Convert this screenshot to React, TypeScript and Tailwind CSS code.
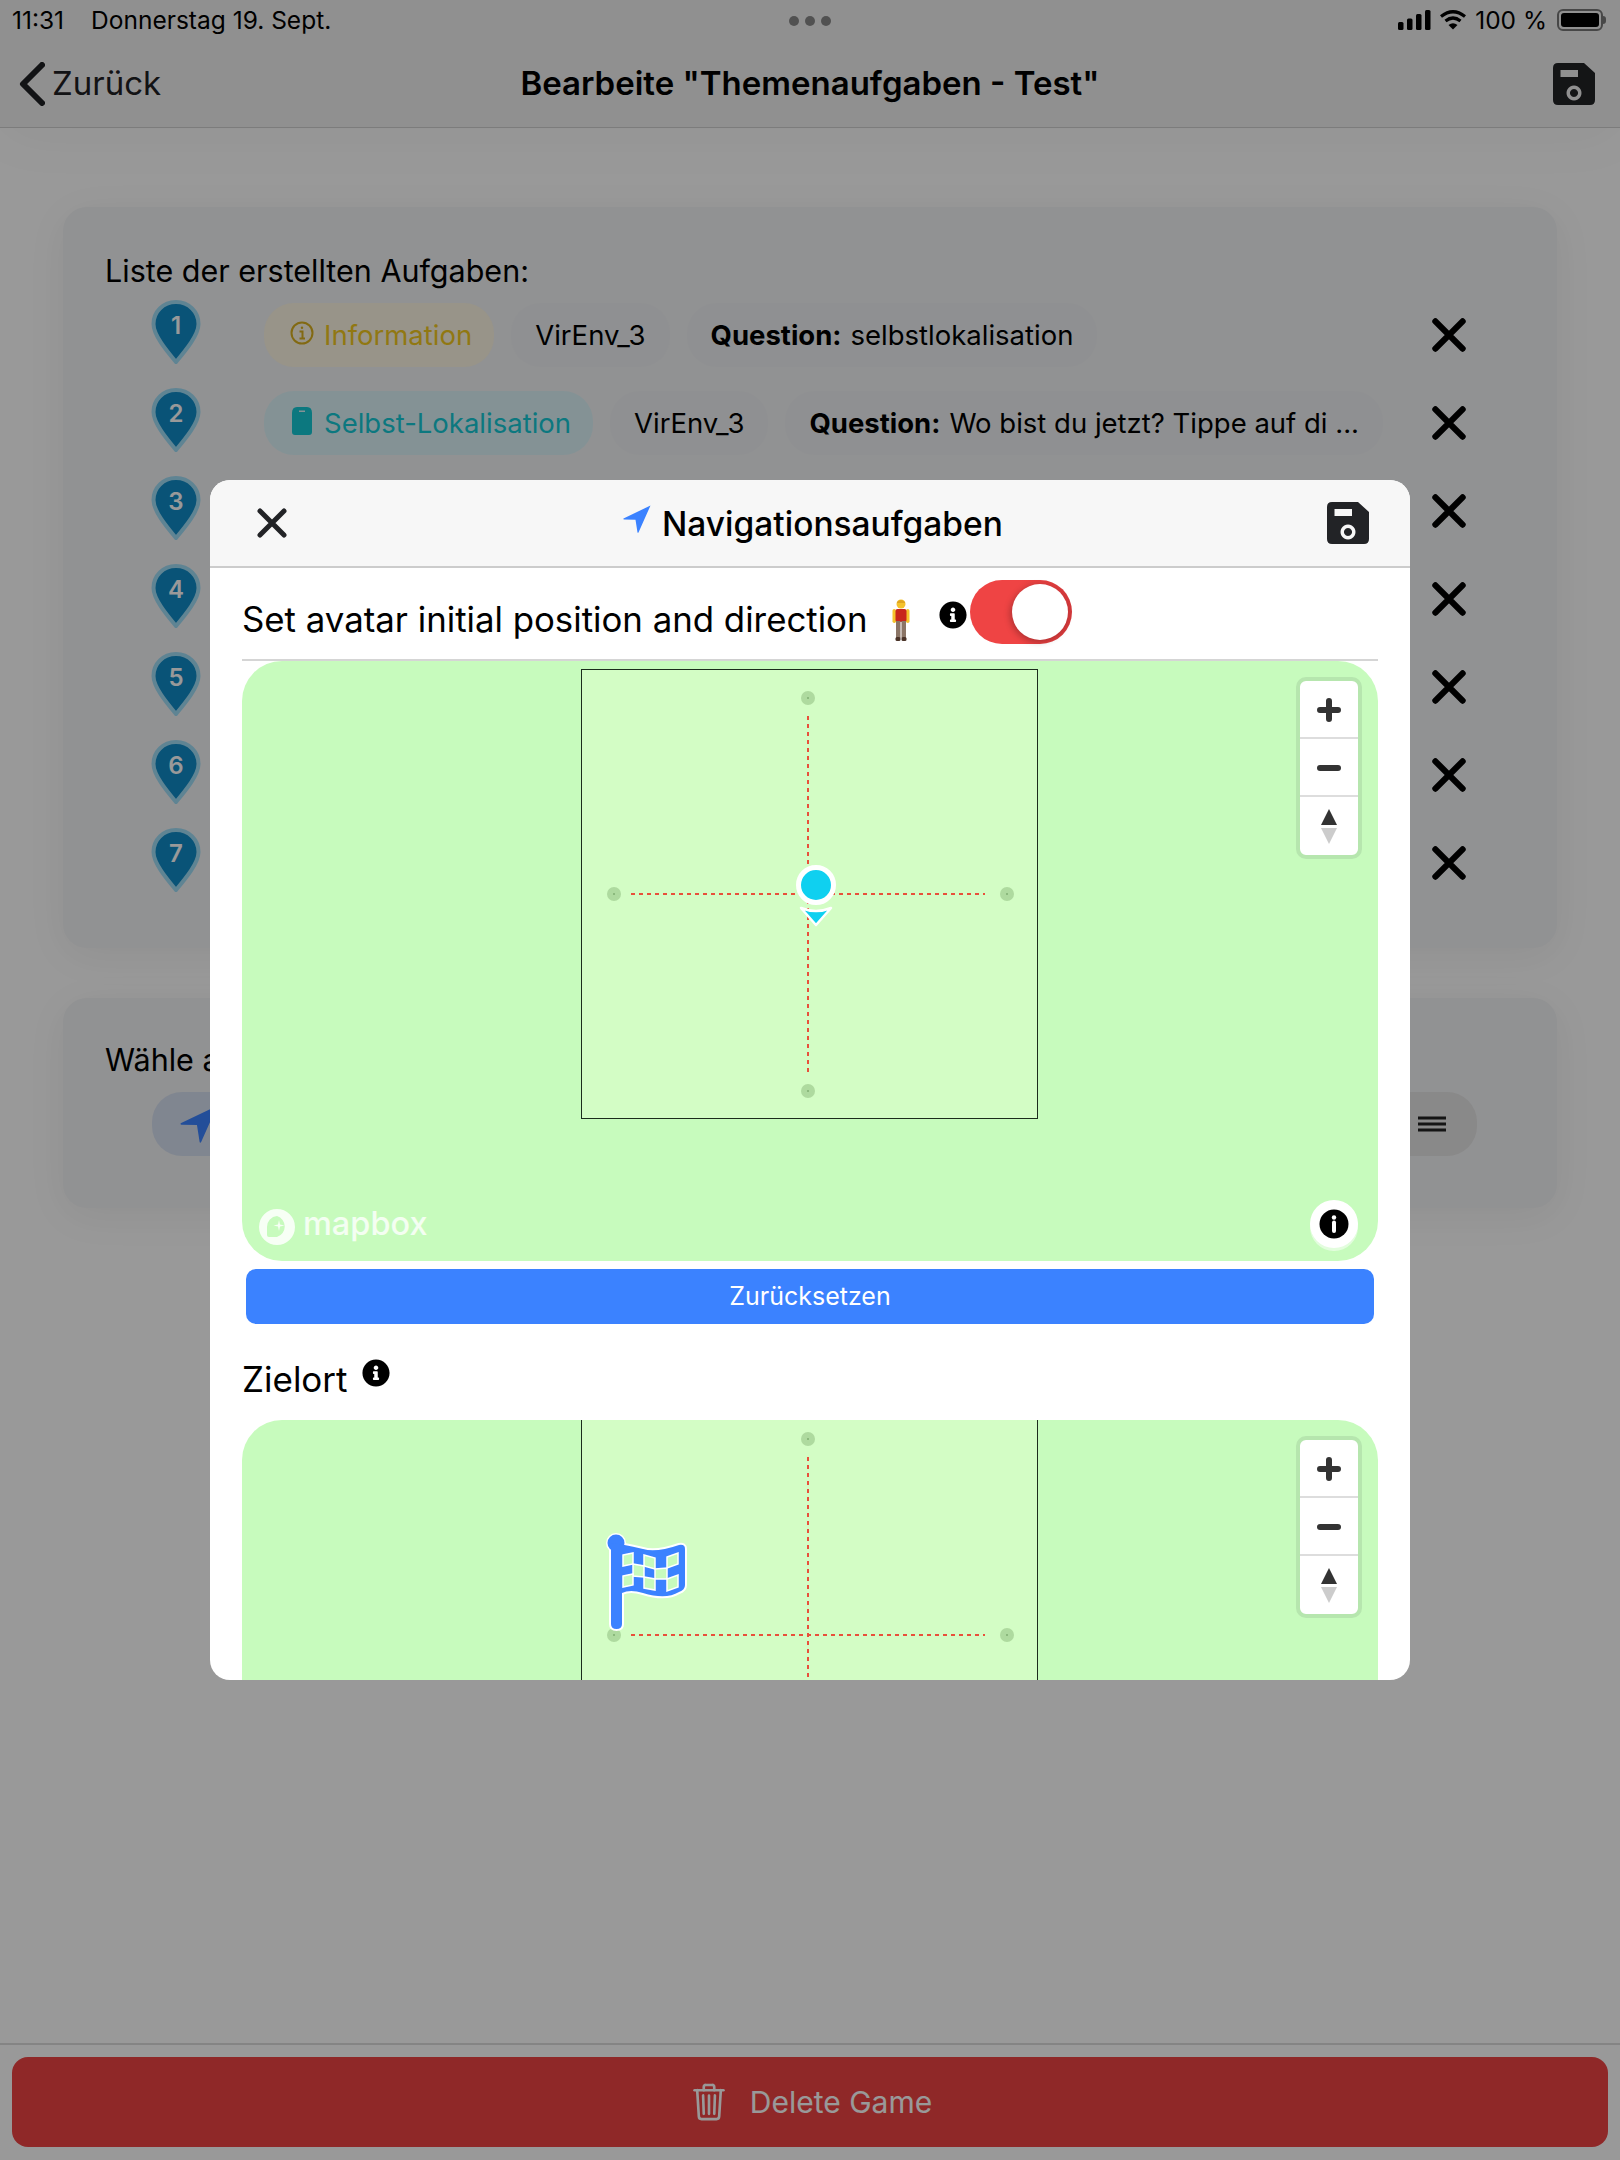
import { FaInfoCircle } from "react-icons/fa";
import { IoTrashOutline } from "react-icons/io5";

const SaveIcon = () => (
  <svg width="42" height="42" viewBox="0 0 42 42" className="shrink-0">
    <path
      fillRule="evenodd"
      fill="#222326"
      d="M5 0H31L42 10V37Q42 42 37 42H5Q0 42 0 37V5Q0 0 5 0ZM7.500 7V14H25V7ZM21 22.500A7.500 7.500 0 1 0 21.010 22.500ZM21 26A4 4 0 1 1 20.990 26Z"
    />
  </svg>
);

const CloseIcon = ({ size, color, weight }: { size: number; color: string; weight: number }) => (
  <svg width={size} height={size} viewBox="0 0 30 30" className="shrink-0">
    <path d="M3 3L27 27M27 3L3 27" stroke={color} strokeWidth={weight} strokeLinecap="round" />
  </svg>
);

const NavArrow = ({ size, color }: { size: number; color: string }) => (
  <svg width={size} height={size} viewBox="0 0 28 28" className="shrink-0">
    <path d="M27.500 0.500L0.500 13.500Q0 14.500 1 14.500L12.500 14.800L14.500 27.500Q15 28 15.500 27.500Z" fill={color} />
  </svg>
);

const Pin = ({ n }: { n: number }) => (
  <div className="relative -mt-[6px] h-[64px] w-[50px] shrink-0">
    <svg width="50" height="64" viewBox="0 0 50 64">
      <path d="M25 2C12 2 2.500 12 2.500 24C2.500 35 15 50 25 62C35 50 47.500 35 47.500 24C47.500 12 38 2 25 2Z" fill="#108ac6" stroke="#9fdcf5" strokeWidth="4" />
    </svg>
    <span className="absolute left-0 right-0 top-[11px] text-center text-[24px] font-semibold leading-[30px] text-white">{n}</span>
  </div>
);

const Chip = ({ className, children }: { className?: string; children: React.ReactNode }) => (
  <div className={"flex h-[64px] shrink-0 items-center whitespace-nowrap rounded-[30px] pt-[1px] text-[27.500px] " + (className ?? "bg-[#eff1f3] px-[24px] text-black")}>
    {children}
  </div>
);

const InfoOutline = () => (
  <svg width="24" height="24" viewBox="0 0 24 24" className="mb-[6px] mr-[10px]" fill="none" stroke="#d9b01e">
    <circle cx="12" cy="12" r="10.500" strokeWidth="2" />
    <path d="M9.500 10.500H12.500V17M9.500 17.500H15" strokeWidth="2" />
    <circle cx="12" cy="6.800" r="1.200" fill="#d9b01e" stroke="none" />
  </svg>
);

const ClipIcon = () => (
  <svg width="20" height="28" viewBox="0 0 20 28" className="mb-[6px] mr-[12px]">
    <path fillRule="evenodd" fill="#14c8d4" d="M5 0H15Q20 0 20 6V25Q20 28 17 28H3Q0 28 0 25V6Q0 0 5 0ZM7 3.500V5H13V3.500Z" />
  </svg>
);

const rows = [1, 2, 3, 4, 5, 6, 7];

const Person = () => (
  <svg width="18" height="42" viewBox="0 0 18 42">
    <circle cx="9" cy="5" r="4.500" fill="#f5c32c" />
    <path d="M5 3Q9 -1 13 3L13 4H5Z" fill="#e0a520" />
    <rect x="0.500" y="10" width="3.500" height="14" rx="1.700" fill="#f5c32c" />
    <rect x="14" y="10" width="3.500" height="14" rx="1.700" fill="#f5c32c" />
    <rect x="3.500" y="10" width="11" height="13" rx="2" fill="#c8261c" />
    <rect x="4" y="22" width="4.500" height="17" fill="#8b7566" />
    <rect x="9.500" y="22" width="4.500" height="17" fill="#8b7566" />
    <rect x="3.500" y="38" width="5" height="4" rx="1.500" fill="#4a3328" />
    <rect x="9.500" y="38" width="5" height="4" rx="1.500" fill="#4a3328" />
  </svg>
);

const flagBody = "M5 10Q16 11 37 16Q50 20 73 12Q79 11 79 16V52Q79 57 73 59Q60 67 37 60Q24 56 16 60V91Q16 96 10.500 96Q5 96 5 91Z";

const Flag = () => (
  <svg width="84" height="100" viewBox="0 0 84 100">
    <circle cx="10" cy="10" r="10" fill="#fff" />
    <path d={flagBody} fill="#fff" stroke="#fff" strokeWidth="4" strokeLinejoin="round" />
    <circle cx="10" cy="10" r="8.500" fill="#3b82ff" />
    <path d={flagBody} fill="#3b82ff" />
    <g fill="#c7fbbd" stroke="#fff" strokeWidth="1.500">
      <path d="M17 22L27 20V31L17 33Z" />
      <path d="M38 22L49 25V36L38 33Z" />
      <path d="M61 24L72 20V31L61 35Z" />
      <path d="M27 31L38 33V44L27 43Z" />
      <path d="M49 36L61 35V46L49 46Z" />
      <path d="M17 43L27 41V52L17 54Z" />
      <path d="M38 44L49 46V57L38 55Z" />
      <path d="M61 46L72 42V54L61 58Z" />
    </g>
  </svg>
);

const Marker = () => (
  <div className="absolute left-[553px] top-[204px] flex w-[42px] flex-col items-center">
    <div className="h-[40px] w-[40px] shrink-0 rounded-full border-[5px] border-white bg-[#0fd0f0]" />
    <svg width="36" height="22" viewBox="0 0 36 22" className="shrink-0">
      <path d="M3 3Q18 9 33 3L18 20Z" fill="#0fd0f0" stroke="#fff" strokeWidth="2.500" strokeLinejoin="round" />
    </svg>
  </div>
);

const MapControls = () => (
  <div className="absolute right-[16px] top-[16px] flex w-[66px] flex-col rounded-[10px] border-[4px] border-[#b6e6ae] bg-white">
    <div className="flex h-[58px] items-center justify-center border-b-2 border-[#dddddd] pt-[2px]">
      <svg width="24" height="24" viewBox="0 0 24 24"><path d="M12 3V21M3 12H21" stroke="#333" strokeWidth="6" strokeLinecap="round" /></svg>
    </div>
    <div className="flex h-[58px] items-center justify-center border-b-2 border-[#dddddd] pt-[2px]">
      <svg width="24" height="24" viewBox="0 0 24 24"><path d="M3 12H21" stroke="#333" strokeWidth="6" strokeLinecap="round" /></svg>
    </div>
    <div className="flex h-[58px] items-center justify-center">
      <svg width="18" height="36" viewBox="0 0 18 36">
        <path d="M9 1L17 17H1Z" fill="#333" />
        <path d="M1 20H17L9 36Z" fill="#ccc" />
      </svg>
    </div>
  </div>
);

// shared map drawing, offset is where the square's top sits inside the map
const RoomMap = ({ offset, children }: { offset: number; children?: React.ReactNode }) => (
  <div className="relative h-[600px] w-[1136px] shrink-0 overflow-hidden rounded-[40px] bg-[#c7fbbd]">
    <div className="absolute left-[339px] h-[450px] w-[457px] border border-[#1c2c1c] bg-[#d3fdc5]" style={{ top: offset }}>
      <svg width="455" height="448" viewBox="0 0 455 448" className="absolute left-0 top-0">
        <path d="M226 46V406M49 224H403" stroke="#e8503a" strokeWidth="2" strokeDasharray="4 4" />
        {[[226, 28], [226, 421], [32, 224], [425, 224]].map(([x, y]) => (
          <g key={x + "-" + y}>
            <circle cx={x} cy={y} r="7" fill="#aeda9f" />
            <circle cx={x} cy={y} r="1" fill="#7fae72" />
          </g>
        ))}
      </svg>
    </div>
    {children}
    <MapControls />
  </div>
);

const Attribution = () => (
  <>
    <div className="absolute bottom-[16px] left-[17px] flex items-center gap-[8px] text-white/80">
      <svg width="36" height="36" viewBox="0 0 36 36">
        <path fillRule="evenodd" fill="#fff" fillOpacity="0.85" d="M18 0A18 18 0 1 1 18 36A18 18 0 1 1 18 0ZM18 7A11 11 0 0 0 8 18L8 26Q8 28 10 28L18 28A11 11 0 0 0 18 7Z" />
        <path d="M20 11L21 15.500L25.500 16.500L21 17.500L20 22L19 17.500L14.500 16.500L19 15.500Z" fill="#fff" fillOpacity="0.85" />
      </svg>
      <span className="-mt-[6px] text-[32.500px] font-medium leading-[36px]">mapbox</span>
    </div>
    <div className="absolute bottom-[13px] right-[20px] flex h-[48px] w-[48px] items-center justify-center rounded-full bg-white shadow-[0_3px_0_rgba(255,255,255,0.5)]">
      <svg width="30" height="30" viewBox="0 0 30 30">
        <circle cx="15" cy="15" r="14.500" fill="#000" />
        <circle cx="15" cy="8.500" r="2.200" fill="#fff" />
        <path d="M15 13.500V22" stroke="#fff" strokeWidth="4" strokeLinecap="round" />
      </svg>
    </div>
  </>
);

const App = () => {
  return (
    <div className="relative flex h-[2160px] w-[1620px] flex-col overflow-hidden bg-white font-['Inter',sans-serif] text-black">
      <header className="border-b border-[#cfcfcf] bg-[#f0f0f0] shadow-[0_8px_60px_rgba(0,0,0,0.04)]">
        <div className="relative flex h-[40px] items-center justify-between pl-[12px] pr-[14px] text-[24.500px] leading-[28px]">
          <div className="flex gap-[27px]">
            <span>11:31</span>
            <span>Donnerstag 19. Sept.</span>
          </div>
          <div className="absolute left-[789px] top-[16px] flex gap-[6px]">
            <div className="h-[10px] w-[10px] rounded-full bg-[#888]" />
            <div className="h-[10px] w-[10px] rounded-full bg-[#888]" />
            <div className="h-[10px] w-[10px] rounded-full bg-[#888]" />
          </div>
          <div className="flex items-center gap-[8px]">
            <svg width="33" height="20" viewBox="0 0 33 20" fill="#000">
              <rect x="0" y="12" width="5.500" height="8" rx="1.500" />
              <rect x="9" y="8.500" width="5.500" height="11.500" rx="1.500" />
              <rect x="18" y="4" width="5.500" height="16" rx="1.500" />
              <rect x="27" y="0" width="5.500" height="20" rx="1.500" />
            </svg>
            <svg width="28" height="22" viewBox="0 0 28 22" fill="none" stroke="#000" strokeWidth="3.200">
              <path d="M2 7.500Q14 -2 26 7.500" />
              <path d="M6.500 12Q14 6 21.500 12" />
              <path d="M14 20.500L9.500 16Q14 12.500 18.500 16Z" fill="#000" stroke="none" />
            </svg>
            <span>100 %</span>
            <div className="ml-[2px] flex items-center">
              <div className="h-[22px] w-[46px] rounded-[6px] border-2 border-[#777] p-[2px]">
                <div className="h-full w-full rounded-[3px] bg-black" />
              </div>
              <div className="h-[8px] w-[3px] rounded-r-full bg-[#777]" />
            </div>
          </div>
        </div>
        <div className="relative flex h-[87px] items-center justify-between pl-[19px] pr-[25px]">
          <div className="flex items-center gap-[7px] text-[33px] text-[#1f2023]">
            <svg width="26" height="44" viewBox="0 0 26 44" fill="none">
              <path d="M23 3L4 22L23 41" stroke="#1f2023" strokeWidth="6" strokeLinecap="round" strokeLinejoin="round" />
            </svg>
            <span>Zurück</span>
          </div>
          <div className="absolute left-0 right-0 text-center text-[33px] font-semibold">Bearbeite "Themenaufgaben - Test"</div>
          <SaveIcon />
        </div>
      </header>

      <main className="flex flex-col gap-[50px] px-[63px] pt-[79px]">
        <section className="rounded-[24px] bg-[#f2f3f5] pb-[53px] pl-[42px] pr-[91px] pt-[44px] shadow-[0_8px_40px_rgba(0,0,0,0.06)]">
          <h2 className="mb-[12px] text-[30.500px] leading-[40px]">Liste der erstellten Aufgaben:</h2>
          <div className="flex flex-col gap-[24px] pl-[46px]">
            {rows.map((n) => (
              <div key={n} className="flex h-[64px] items-center gap-[63px]">
                <Pin n={n} />
                <div className="flex min-w-0 flex-1 gap-[17px]">
                  {n === 1 && (
                    <>
                      <Chip className="bg-[#fdf7e4] pl-[26px] pr-[22px] text-[#f2c81f]"><InfoOutline />Information</Chip>
                      <Chip>VirEnv_3</Chip>
                      <Chip><b className="mr-[9px]">Question:</b> selbstlokalisation</Chip>
                    </>
                  )}
                  {n === 2 && (
                    <>
                      <Chip className="bg-[#dcf4f9] pl-[28px] pr-[22px] text-[#14c8d4]"><ClipIcon />Selbst-Lokalisation</Chip>
                      <Chip>VirEnv_3</Chip>
                      <Chip><b className="mr-[9px]">Question:</b> Wo bist du jetzt? Tippe auf di ...</Chip>
                    </>
                  )}
                </div>
                <CloseIcon size={34} color="#000" weight={5.500} />
              </div>
            ))}
          </div>
        </section>

        <section className="flex h-[210px] flex-col rounded-[24px] bg-[#f2f3f5] pl-[42px] pr-[80px] pt-[42px] shadow-[0_8px_40px_rgba(0,0,0,0.06)]">
          <h2 className="text-[30.500px] leading-[40px]">Wähle aus</h2>
          <div className="mt-[12px] flex justify-between pl-[47px]">
            <div className="flex h-[64px] w-[300px] items-center rounded-[30px] bg-[#d6e0f0] pl-[28px]">
              <NavArrow size={38} color="#3b82ff" />
            </div>
            <div className="flex h-[64px] w-[300px] items-center justify-end rounded-[30px] bg-[#e4e4e4] pr-[31px]">
              <svg width="28" height="16" viewBox="0 0 28 16"><path d="M0 2H28M0 8H28M0 14H28" stroke="#222" strokeWidth="3" /></svg>
            </div>
          </div>
        </section>
      </main>

      <footer className="mt-auto h-[117px] border-t-2 border-[#dcdcdc] px-[12px] pt-[12px]">
        <button className="flex h-[90px] w-full items-center justify-center gap-[20px] rounded-[16px] bg-[#ef4444] text-[30px] text-white">
          <IoTrashOutline size={42} />
          Delete Game
        </button>
      </footer>

      <div className="absolute inset-0 flex items-center justify-center bg-black/40">
        <div className="flex h-[1200px] w-[1200px] flex-col overflow-hidden rounded-[20px] bg-white">
          <div className="relative flex h-[88px] shrink-0 items-center justify-between border-b-2 border-[#cccccc] bg-[#f7f7f7] pl-[47px] pr-[41px]">
            <CloseIcon size={30} color="#222326" weight={5} />
            <div className="absolute left-[413px] top-[25px] flex items-start gap-[11px]">
              <NavArrow size={28} color="#3b82ff" />
              <span className="text-[33.500px] font-medium leading-[38px]">Navigationsaufgaben</span>
            </div>
            <SaveIcon />
          </div>

          <div className="flex flex-col px-[32px]">
            <div className="flex h-[93px] items-center border-b-2 border-[#d5d5d5]">
              <span className="mt-[12px] text-[34.800px]">Set avatar initial position and direction</span>
              <div className="ml-[24px] mt-[12px]"><Person /></div>
              <FaInfoCircle size={28} className="ml-[29px] mt-[2px] text-black" />
              <div className="-mt-[4px] ml-[3px] flex h-[64px] w-[102px] items-center justify-end rounded-full bg-gradient-to-r from-[#ef4444] from-50% to-[#d2383a] pr-[4px]">
                <div className="h-[56px] w-[56px] rounded-full bg-white shadow-[-2px_2px_6px_rgba(0,0,0,0.25)]" />
              </div>
            </div>

            <RoomMap offset={8}>
              <Marker />
              <Attribution />
            </RoomMap>

            <button className="mx-[4px] mt-[8px] h-[55px] shrink-0 rounded-[10px] bg-[#3b82ff] text-[25px] text-white">Zurücksetzen</button>

            <div className="flex h-[96px] shrink-0 items-start pt-[35px]">
              <span className="text-[35px] leading-[40px]">Zielort</span>
              <FaInfoCircle size={28} className="ml-[14px] text-black" />
            </div>

            <RoomMap offset={-10}>
              <div className="absolute left-[364px] top-[113px]"><Flag /></div>
            </RoomMap>
          </div>
        </div>
      </div>
    </div>
  );
};

export default App;
